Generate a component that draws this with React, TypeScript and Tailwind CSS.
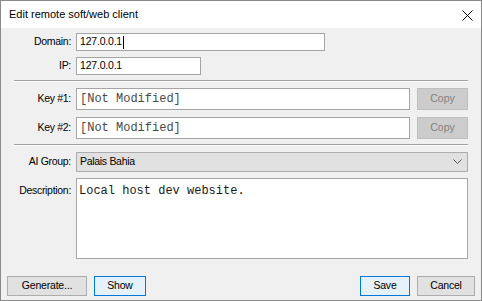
import React from 'react';

const ui = { fontFamily: '"Liberation Sans", Arial, sans-serif' };
const mono = { fontFamily: '"Liberation Mono", "Courier New", monospace' };

const Label = ({ children }: { children: React.ReactNode }) => (
  <div className="w-[71px] shrink-0 pr-[1px] text-right text-[10.5px] tracking-[-0.3px] text-black">{children}</div>
);

const Separator = () => (
  <div className="ml-[13px] mr-[13px] border-t border-t-[#a0a0a0] border-b border-b-white" />
);

const App = () => {
  return (
    <div className="w-[482px] h-[301px] border border-[#8a8a8a] flex flex-col bg-[#f0f0f0]" style={ui}>
      {/* title bar */}
      <div className="h-[27px] shrink-0 bg-white flex items-center justify-between pl-[8px] pr-[8px]">
        <span className="text-[11px] text-black">Edit remote soft/web client</span>
        <svg width="11" height="11" viewBox="0 0 11 11" className="mt-[1px]">
          <path d="M0.5 0.5 L10.5 10.5 M10.5 0.5 L0.5 10.5" stroke="#000" strokeWidth="1" />
        </svg>
      </div>

      <div className="flex-1 flex flex-col pt-[5px]">
        {/* domain / ip */}
        <div className="flex items-center gap-[4px]">
          <Label>Domain:</Label>
          <div className="w-[249px] h-[18px] bg-white border border-[#a5a5a5] flex items-center pl-[3px] text-[10.5px] tracking-[-0.2px] text-black">
            127.0.0.1
            <span className="inline-block w-px h-[13px] bg-black ml-[1px]" />
          </div>
        </div>
        <div className="flex items-center gap-[4px] mt-[6px]">
          <Label>IP:</Label>
          <div className="w-[125px] h-[18px] bg-white border border-[#a5a5a5] flex items-center pl-[3px] text-[10.5px] tracking-[-0.2px] text-black">
            127.0.0.1
          </div>
        </div>

        <div className="mt-[5px] mb-[6px]">
          <Separator />
        </div>

        {/* keys */}
        {['Key #1:', 'Key #2:'].map((k, i) => (
          <div key={k} className={`flex items-center gap-[4px] ${i === 1 ? 'mt-[7px]' : ''}`}>
            <Label>{k}</Label>
            <div
              className="w-[334px] h-[22px] bg-white border border-[#a5a5a5] flex items-center pl-[3px] text-[12px] text-[#4a4a4a]"
              style={mono}
            >
              [Not Modified]
            </div>
            <div className="ml-[3px] w-[51px] h-[22px] bg-[#cccccc] border border-[#bfbfbf] flex items-center justify-center text-[10.5px] text-[#838383]">
              Copy
            </div>
          </div>
        ))}

        <div className="mt-[5px] mb-[6px]">
          <Separator />
        </div>

        {/* group */}
        <div className="flex items-center gap-[4px]">
          <Label>AI Group:</Label>
          <div className="w-[392px] h-[20px] bg-[#e1e1e1] border border-[#adadad] flex items-center justify-between pl-[3px] pr-[5px] text-[10.5px] tracking-[-0.3px] text-black">
            <span>Palais Bahia</span>
            <svg width="9" height="6" viewBox="0 0 9 6">
              <path d="M0.5 0.5 L4.5 4.5 L8.5 0.5" fill="none" stroke="#555" strokeWidth="1" />
            </svg>
          </div>
        </div>

        {/* description */}
        <div className="flex items-start gap-[4px] mt-[6px]">
          <div className="pt-[5px]">
            <Label>Description:</Label>
          </div>
          <div
            className="w-[392px] h-[81px] bg-white border border-[#a5a5a5] pl-[2px] pt-[5px] text-[12px] leading-[14px] text-[#1a1a1a]"
            style={mono}
          >
            Local host dev website.
          </div>
        </div>

        {/* buttons */}
        <div className="mt-auto mb-[4px] flex items-center justify-between px-[6px] text-[10.5px] tracking-[-0.2px] text-black">
          <div className="flex gap-[7px]">
            <div className="w-[80px] h-[20px] bg-[#e1e1e1] border border-[#adadad] flex items-center justify-center">
              Generate...
            </div>
            <div className="w-[52px] h-[20px] bg-[#e5f1fb] border border-[#0078d7] flex items-center justify-center">
              Show
            </div>
          </div>
          <div className="flex gap-[7px]">
            <div className="w-[50px] h-[20px] bg-[#e5f1fb] border border-[#0078d7] flex items-center justify-center">
              Save
            </div>
            <div className="w-[58px] h-[20px] bg-[#e1e1e1] border border-[#adadad] flex items-center justify-center">
              Cancel
            </div>
          </div>
        </div>
      </div>
    </div>
  );
};

export default App;
